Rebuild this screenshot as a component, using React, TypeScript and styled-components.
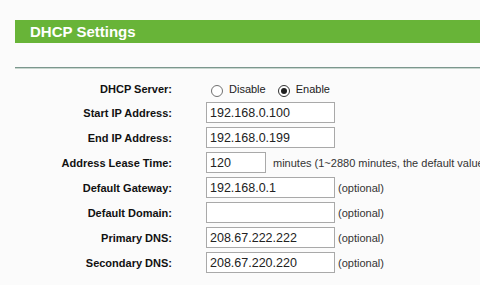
import React from 'react';
import styled, { createGlobalStyle } from 'styled-components';

const Global = createGlobalStyle`
  html, body { margin: 0; padding: 0; background: #fbfbfb; overflow: hidden; }
  body { font-family: "Liberation Sans", Arial, sans-serif; }
`;

const Page = styled.div`
  width: 760px;
  padding: 20px 0 0 15px;
`;

const TitleBar = styled.h1`
  margin: 0;
  height: 23px;
  line-height: 23px;
  padding-left: 15px;
  background: #68b438;
  color: #fff;
  font-size: 15px;
  font-weight: bold;
`;

const Divider = styled.hr`
  margin: 24px 0 0;
  border: 0;
  border-top: 1px solid #7b978d;
  border-bottom: 1px solid #c8d6cf;
  height: 0;
`;

const Form = styled.div`
  display: grid;
  grid-template-columns: 157px auto;
  grid-template-rows: 19px repeat(7, 21px);
  column-gap: 34px;
  row-gap: 4px;
  margin-top: 10px;
  align-items: center;
`;

const Label = styled.div`
  text-align: right;
  font-size: 11px;
  font-weight: bold;
  color: #111;
  white-space: nowrap;
`;

const Control = styled.div<{ $gap?: number }>`
  display: flex;
  align-items: center;
  gap: ${(p) => p.$gap ?? 3}px;
  white-space: nowrap;
  height: 100%;
`;

const Field = styled.div<{ $w?: number }>`
  box-sizing: border-box;
  width: ${(p) => p.$w ?? 129}px;
  height: 21px;
  border: 1px solid #a9a9a9;
  background: #fff;
  padding: 2px 0 0 3px;
  font-size: 12.5px;
  line-height: 17px;
  color: #222;
  flex: none;
`;

const Hint = styled.span`
  font-size: 11px;
  color: #333;
`;

const RadioGroup = styled.div`
  display: flex;
  align-items: center;
  gap: 7px;
`;

const Option = styled.label`
  display: flex;
  align-items: center;
  font-size: 11px;
  color: #222;
`;

const Radio = styled.span<{ $checked?: boolean }>`
  box-sizing: border-box;
  width: 12px;
  height: 12px;
  margin: 4px 6px 0 5px;
  border-radius: 50%;
  border: 1px solid ${(p) => (p.$checked ? '#333' : '#707070')};
  background: #fff;
  display: flex;
  align-items: center;
  justify-content: center;
  &::after {
    content: '';
    width: 6px;
    height: 6px;
    border-radius: 50%;
    background: ${(p) => (p.$checked ? '#1e1e1e' : 'transparent')};
  }
`;

const rows: { label: string; value: string; hint?: string; width?: number; gap?: number }[] = [
  { label: 'Start IP Address:', value: '192.168.0.100' },
  { label: 'End IP Address:', value: '192.168.0.199' },
  { label: 'Address Lease Time:', value: '120', width: 60, gap: 7, hint: 'minutes (1~2880 minutes, the default value is 120)' },
  { label: 'Default Gateway:', value: '192.168.0.1', hint: '(optional)' },
  { label: 'Default Domain:', value: '', hint: '(optional)' },
  { label: 'Primary DNS:', value: '208.67.222.222', hint: '(optional)' },
  { label: 'Secondary DNS:', value: '208.67.220.220', hint: '(optional)' },
];

export default function App() {
  return (
    <>
      <Global />
      <Page>
        <TitleBar>DHCP Settings</TitleBar>
        <Divider />
        <Form>
          <Label>DHCP Server:</Label>
          <Control>
            <RadioGroup>
              <Option>
                <Radio />
                Disable
              </Option>
              <Option>
                <Radio $checked />
                Enable
              </Option>
            </RadioGroup>
          </Control>
          {rows.map((r) => (
            <React.Fragment key={r.label}>
              <Label>{r.label}</Label>
              <Control $gap={r.gap}>
                <Field $w={r.width}>{r.value}</Field>
                {r.hint && <Hint>{r.hint}</Hint>}
              </Control>
            </React.Fragment>
          ))}
        </Form>
      </Page>
    </>
  );
}
